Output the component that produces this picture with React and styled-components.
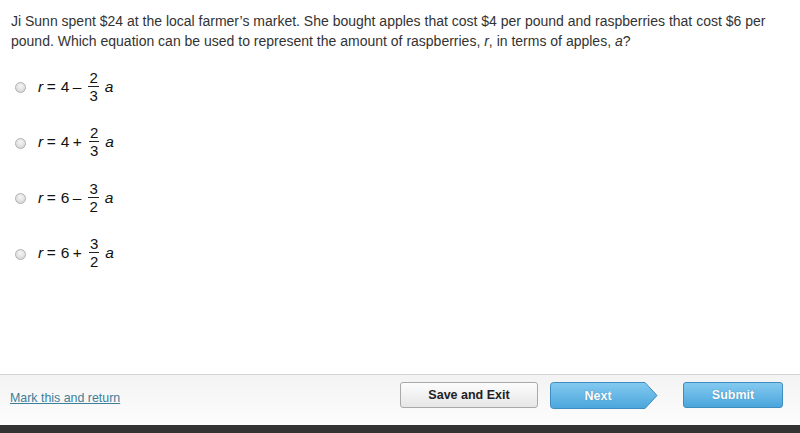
import React from 'react';
import styled, { createGlobalStyle } from 'styled-components';

const GlobalStyle = createGlobalStyle`
  html, body {
    margin: 0;
    padding: 0;
    background: #fff;
  }
  body {
    font-family: "Liberation Sans", Arial, sans-serif;
  }
`;

const Page = styled.div`
  width: 800px;
  height: 433px;
  display: flex;
  flex-direction: column;
  overflow: hidden;
`;

const Content = styled.div`
  flex: 1;
  padding: 11px 10px 0 11px;
`;

const Question = styled.p`
  margin: 0;
  font-size: 14px;
  line-height: 20px;
  color: #333;
`;

const Var = styled.i`
  font-style: italic;
`;

const Options = styled.div`
  display: flex;
  flex-direction: column;
  margin-top: 9px;
`;

const Option = styled.label`
  display: flex;
  align-items: center;
  height: 55.5px;
  padding-left: 4px;
  cursor: pointer;
`;

const Radio = styled.span`
  width: 11px;
  height: 11px;
  border-radius: 50%;
  border: 1px solid #b0b0b0;
  background: radial-gradient(circle at 50% 35%, #f6f6f6 0%, #dedede 65%, #cdcdcd 100%);
  box-sizing: border-box;
  margin-right: 12px;
  flex-shrink: 0;
`;

const Equation = styled.span`
  display: inline-flex;
  align-items: center;
  font-size: 15.5px;
  color: #111;
  margin-top: -2px;
`;

const Sym = styled.span`
  margin-right: ${props => props.after || 0}px;
  font-style: ${props => (props.italic ? 'italic' : 'normal')};
`;

const Fraction = styled.span`
  display: inline-flex;
  flex-direction: column;
  align-items: center;
  margin-right: 6px;
  line-height: 14px;
  font-size: 15px;
`;

const Numerator = styled.span`
  padding: 0 1px 1px;
  border-bottom: 1px solid #222;
`;

const Denominator = styled.span`
  padding: 2px 1px 0;
`;

const Footer = styled.div`
  height: 51px;
  border-top: 1px solid #d4d4d4;
  background: linear-gradient(#f3f3f3, #fdfdfd);
  display: flex;
  align-items: flex-start;
  padding: 7px 17px 0 10px;
  box-sizing: border-box;
`;

const MarkLink = styled.a`
  font-size: 12.4px;
  line-height: 16px;
  color: #3d7f99;
  text-decoration: underline;
  margin-right: auto;
  margin-top: 8px;
`;

const Button = styled.button`
  height: 26px;
  width: ${props => props.width}px;
  margin-left: ${props => props.gap || 0}px;
  border-radius: 3px;
  font-family: "Liberation Sans", Arial, sans-serif;
  font-size: 12.5px;
  font-weight: bold;
  cursor: pointer;
  padding: 0;
`;

const GrayButton = styled(Button)`
  border: 1px solid #a9a9a9;
  background: linear-gradient(#fdfdfd, #e6e6e6);
  color: #222;
`;

const BlueButton = styled(Button)`
  border: 1px solid #3e8cc0;
  background: linear-gradient(#84caf0, #4aa6dc);
  color: #fff;
  text-shadow: 0 0 1px rgba(20, 80, 130, 0.6);
`;

const NextWrap = styled.div`
  position: relative;
  width: 108px;
  height: 27px;
  margin-left: ${props => props.gap}px;
  display: flex;
  align-items: center;
  cursor: pointer;
`;

const NextShape = styled.svg`
  position: absolute;
  inset: 0;
`;

const NextLabel = styled.span`
  position: relative;
  width: 96px;
  text-align: center;
  font-size: 12.5px;
  font-weight: bold;
  color: #fff;
  text-shadow: 0 0 1px rgba(20, 80, 130, 0.6);
`;

const BottomBar = styled.div`
  height: 8px;
  background: #333;
`;

const Frac = ({ n, d }) => (
  <Fraction>
    <Numerator>{n}</Numerator>
    <Denominator>{d}</Denominator>
  </Fraction>
);

const options = [
  { k: '4', op: '–', n: '2', d: '3' },
  { k: '4', op: '+', n: '2', d: '3' },
  { k: '6', op: '–', n: '3', d: '2' },
  { k: '6', op: '+', n: '3', d: '2' }
];

export default function App() {
  return (
    <Page>
      <GlobalStyle />
      <Content>
        <Question>
          Ji Sunn spent $24 at the local farmer’s market. She bought apples that cost $4 per pound and raspberries that cost $6 per
          pound. Which equation can be used to represent the amount of raspberries, <Var>r</Var>, in terms of apples, <Var>a</Var>?
        </Question>
        <Options>
          {options.map((o, i) => (
            <Option key={i}>
              <Radio />
              <Equation>
                <Sym italic after={3.5}>r</Sym>
                <Sym after={5}>=</Sym>
                <Sym after={3.5}>{o.k}</Sym>
                <Sym after={7}>{o.op}</Sym>
                <Frac n={o.n} d={o.d} />
                <Sym italic>a</Sym>
              </Equation>
            </Option>
          ))}
        </Options>
      </Content>
      <Footer>
        <MarkLink href="#">Mark this and return</MarkLink>
        <GrayButton width={138}>Save and Exit</GrayButton>
        <NextWrap gap={12}>
          <NextShape width="108" height="27" viewBox="0 0 108 27">
            <defs>
              <linearGradient id="nextGrad" x1="0" y1="0" x2="0" y2="1">
                <stop offset="0" stopColor="#84caf0" />
                <stop offset="1" stopColor="#4aa6dc" />
              </linearGradient>
            </defs>
            <path
              d="M3.5 0.5 H95 L107 13.5 L95 26.5 H3.5 Q0.5 26.5 0.5 23.5 V3.5 Q0.5 0.5 3.5 0.5 Z"
              fill="url(#nextGrad)"
              stroke="#3e8cc0"
            />
          </NextShape>
          <NextLabel>Next</NextLabel>
        </NextWrap>
        <BlueButton width={100} gap={25}>Submit</BlueButton>
      </Footer>
      <BottomBar />
    </Page>
  );
}
